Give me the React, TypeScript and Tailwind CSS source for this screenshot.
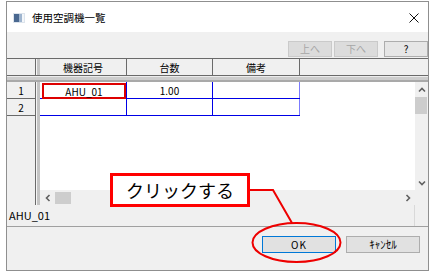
import React from 'react';

type Dir = 'up' | 'down' | 'left' | 'right';

const chevronPaths: Record<Dir, string> = {
  up: 'M1 5.5 L4 2.5 L7 5.5',
  down: 'M1 2.5 L4 5.5 L7 2.5',
  left: 'M5.5 1 L2.5 4 L5.5 7',
  right: 'M2.5 1 L5.5 4 L2.5 7',
};

const Chevron: React.FC<{ dir: Dir }> = ({ dir }) => (
  <svg width="8" height="8" viewBox="0 0 8 8">
    <path d={chevronPaths[dir]} fill="none" stroke="#606060" strokeWidth="1.6" />
  </svg>
);

const TitleIcon = () => (
  <svg width="12" height="10" viewBox="0 0 12 10">
    <rect x="0" y="0" width="12" height="10" fill="#dde4ec" />
    <rect x="1" y="1" width="5" height="8" fill="#4a6890" />
    <rect x="6" y="1" width="3" height="8" fill="#9fb5cf" />
    <rect x="9" y="1" width="2" height="8" fill="#f4f7fa" />
  </svg>
);

const ToolButton: React.FC<{ label: string; disabled?: boolean }> = ({ label, disabled }) => (
  <div
    className={
      disabled
        ? 'w-[44px] h-[16px] bg-[#dcdcdc] border border-[#cacaca] text-[#a6a6a6] text-[10px] leading-[14px] text-center'
        : 'w-[44px] h-[16px] bg-[#e6e6e6] border border-[#adadad] text-black text-[10px] leading-[14px] text-center'
    }
  >
    {label}
  </div>
);

const App: React.FC = () => {
  return (
    <div className="w-[436px] h-[273px] bg-white relative overflow-hidden font-['Noto_Sans_CJK_JP','Noto_Sans',sans-serif] text-black">
      <div className="ml-[6px] mt-[1px] w-[423px] h-[270px] border border-[#8f8f8f] flex flex-col bg-[#f0f0f0]">
        {/* title bar */}
        <div className="h-[30px] bg-white flex items-center">
          <div className="ml-[6px] mt-[1px]">
            <TitleIcon />
          </div>
          <span className="ml-[7px] text-[10.5px] leading-none mt-[2px]">使用空調機一覧</span>
          <div className="ml-auto mr-[9px] mt-[2px]">
            <svg width="10" height="10" viewBox="0 0 10 10">
              <path d="M0.5 0.5 L9.5 9.5 M9.5 0.5 L0.5 9.5" stroke="#111" strokeWidth="1" />
            </svg>
          </div>
        </div>

        {/* toolbar */}
        <div className="h-[26px] flex justify-end items-start pt-[9px] pr-[0px]">
          <div className="flex gap-[2px]">
            <ToolButton label="上へ" disabled />
            <ToolButton label="下へ" disabled />
          </div>
          <div className="ml-[6px]">
            <ToolButton label="?" />
          </div>
        </div>

        {/* grid */}
        <div className="h-[147px] flex flex-col">
          <div className="h-[18px] flex border-y border-[#6a6a6a] bg-[#f0f0f0] text-[10px]">
            <div className="w-[29px] border-r border-[#6a6a6a]" />
            <div className="w-[4px] bg-[#c4c4c4] border-l border-[#f6f6f6]" />
            <div className="w-[87px] border-r border-[#6a6a6a] flex items-center justify-center">機器記号</div>
            <div className="w-[86px] border-r border-[#6a6a6a] flex items-center justify-center">台数</div>
            <div className="w-[87px] border-r border-[#6a6a6a] flex items-center justify-center">備考</div>
            <div className="flex-1" />
          </div>
          <div className="h-[6px] bg-[#cdcdcd] border-t border-[#ececec] border-b-2 border-b-[#a9a9a9]" />
          <div className="h-[123px] flex">
            <div className="w-[29px] border-r border-[#6a6a6a] flex flex-col text-[10px]">
              <div className="h-[17px] border-b border-[#6a6a6a] flex items-center justify-center">1</div>
              <div className="h-[17px] border-b border-[#6a6a6a] flex items-center justify-center">2</div>
            </div>
            <div className="w-[4px] bg-[#c4c4c4] border-l border-[#f6f6f6]" />
            <div className="flex-1 flex flex-col">
              <div className="h-[108px] flex">
                <div className="flex-1 bg-white text-[10px]">
                  <div className="flex h-[17px] border-b border-[#0000e6] w-[260px]">
                    <div className="w-[87px] border-r border-[#0000e6] pl-[2px] pt-[1px]">
                      <div className="h-[16px] border-2 border-[#dd0000] flex items-center justify-center">AHU_01</div>
                    </div>
                    <div className="w-[86px] border-r border-[#0000e6] flex items-center justify-center">1.00</div>
                    <div className="w-[87px] border-r border-[#7b7bff]" />
                  </div>
                  <div className="flex h-[17px] border-b border-[#0000e6] w-[260px]">
                    <div className="w-[87px] border-r border-[#0000e6]" />
                    <div className="w-[86px] border-r border-[#0000e6]" />
                    <div className="w-[87px] border-r border-[#7b7bff]" />
                  </div>
                </div>
                <div className="w-[13px] bg-[#f0f0f0] flex flex-col">
                  <div className="h-[15px] flex items-center justify-center">
                    <Chevron dir="up" />
                  </div>
                  <div className="h-[17px] w-[12px] bg-[#cdcdcd]" />
                  <div className="flex-1" />
                  <div className="h-[15px] flex items-center justify-center">
                    <Chevron dir="down" />
                  </div>
                </div>
              </div>
              <div className="h-[15px] flex">
                <div className="flex-1 flex items-center bg-[#f0f0f0]">
                  <div className="w-[15px] flex items-center justify-center">
                    <Chevron dir="left" />
                  </div>
                  <div className="w-[16px] h-[12px] bg-[#cdcdcd]" />
                  <div className="flex-1" />
                  <div className="w-[15px] flex items-center justify-center">
                    <Chevron dir="right" />
                  </div>
                </div>
                <div className="w-[13px] bg-[#f0f0f0]" />
              </div>
            </div>
          </div>
        </div>

        {/* status bar */}
        <div className="h-[22px] flex border-b border-[#a0a0a0]">
          <div className="flex-1 pl-[2px] flex items-center text-[11px]">AHU_01</div>
          <div className="w-[14px] border-l border-[#d9d9d9]" />
        </div>

        {/* bottom buttons */}
        <div className="flex-1 flex justify-end items-start gap-[10px] pt-[9px] pr-[8px] text-[10px]">
          <div className="w-[74px] h-[17px] bg-[#e1e1e1] border border-[#0078d7] flex items-center justify-center tracking-[1px]">OK</div>
          <div className="w-[74px] h-[17px] bg-[#e1e1e1] border border-[#adadad] flex items-center justify-center text-[11px]">ｷｬﾝｾﾙ</div>
        </div>
      </div>

      {/* annotation */}
      <svg className="absolute left-0 top-0 pointer-events-none" width="436" height="273" viewBox="0 0 436 273">
        <ellipse cx="296.5" cy="242.5" rx="44" ry="19.5" fill="none" stroke="#ee0000" strokeWidth="2" />
        <polyline points="249,190 273,190 292,223" fill="none" stroke="#ee0000" strokeWidth="2" />
      </svg>
      <div className="absolute left-[110px] top-[173px] w-[140px] h-[34px] border-[3px] border-[#ff0000] bg-white flex items-center justify-center text-[18px] leading-none">
        クリックする
      </div>
    </div>
  );
};

export default App;
